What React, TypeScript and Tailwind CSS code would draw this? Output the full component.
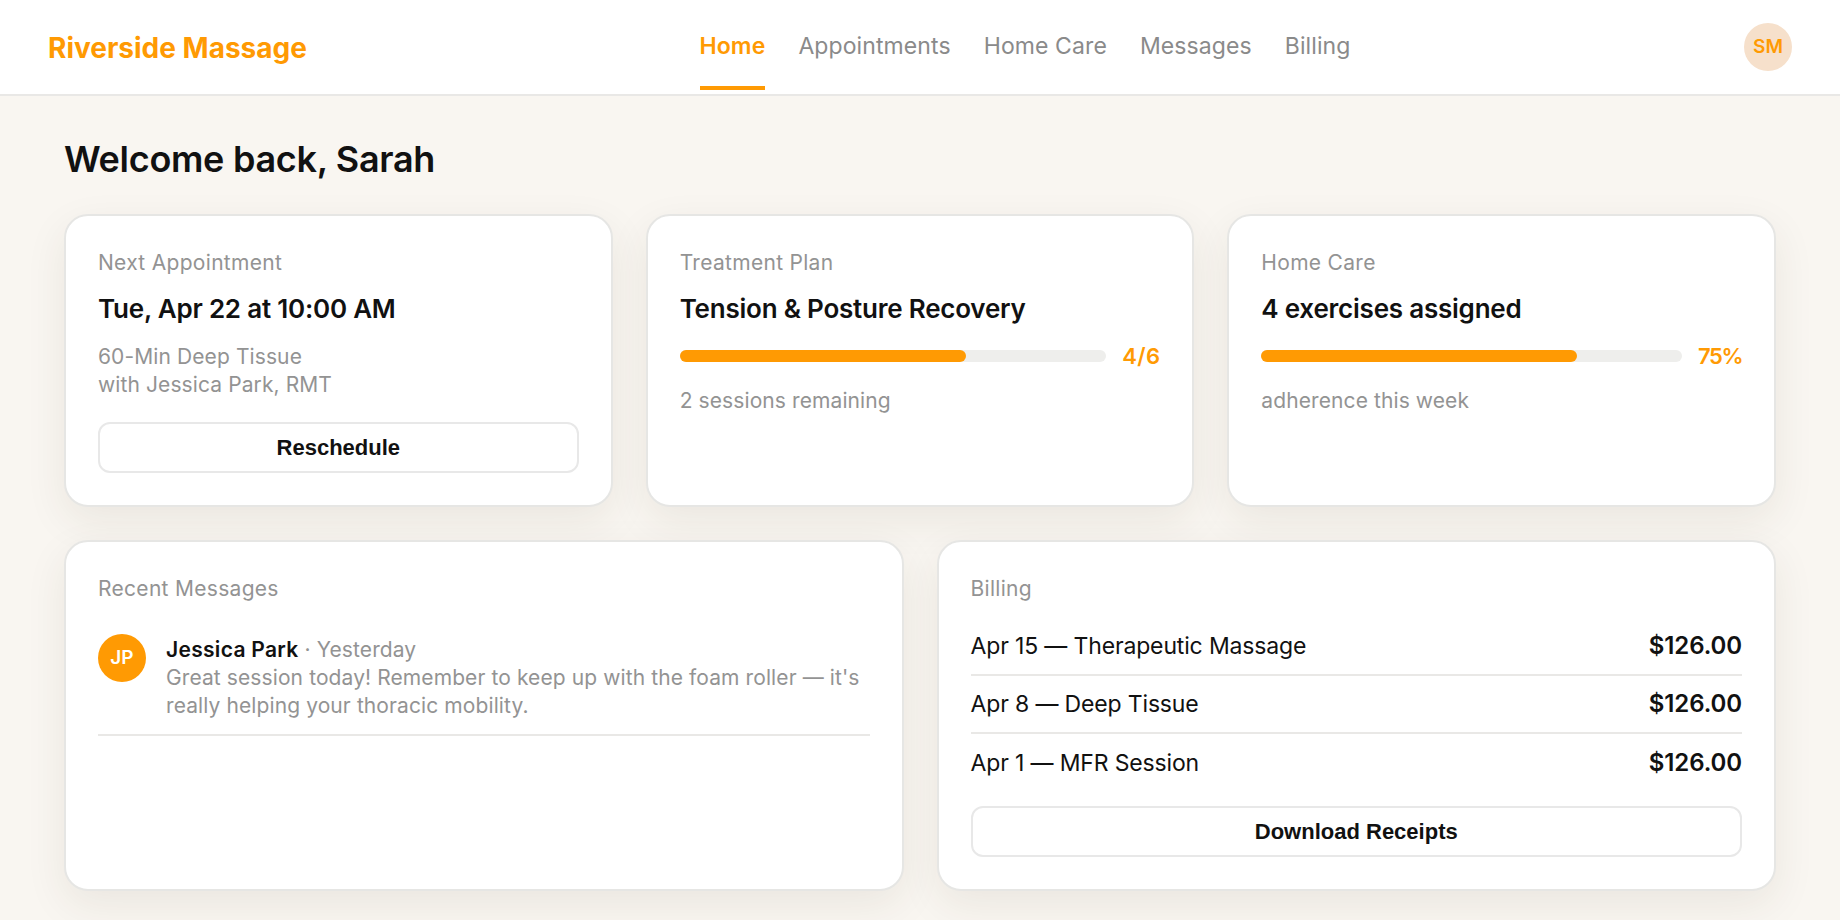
import React from 'react';

const FONT = "font-['Inter','Noto_Sans',sans-serif]";
const ORANGE = 'text-[#ff9a03]';

const navItems = ['Home', 'Appointments', 'Home Care', 'Messages', 'Billing'];

const bills = [
  { label: 'Apr 15 — Therapeutic Massage', amount: '$126.00' },
  { label: 'Apr 8 — Deep Tissue', amount: '$126.00' },
  { label: 'Apr 1 — MFR Session', amount: '$126.00' },
];

function Card({ children, className = '' }: { children: React.ReactNode; className?: string }) {
  return (
    <div
      className={`rounded-[24px] border-2 border-[#e6e6e4] bg-white px-[32px] pt-[33px] pb-[32px] shadow-[0_14px_42px_rgba(60,50,30,0.08)] ${className}`}
    >
      {children}
    </div>
  );
}

function Label({ children }: { children: React.ReactNode }) {
  return <div className="text-[21px] leading-[28px] tracking-[0.3px] text-[#939393]">{children}</div>;
}

function Title({ children }: { children: React.ReactNode }) {
  return <div className="mt-[16px] text-[26px] leading-[32px] font-semibold tracking-[-0.22px] text-[#111]">{children}</div>;
}

function OutlineButton({ children }: { children: React.ReactNode }) {
  return (
    <button className="h-[51px] w-full rounded-[12px] border-2 border-[#e8e8e8] bg-white font-['Liberation_Sans',sans-serif] text-[22px] font-bold text-[#111]">
      {children}
    </button>
  );
}

function Progress({ pct, value, tight }: { pct: number; value: string; tight?: boolean }) {
  return (
    <div className="mt-[17px] flex h-[28px] items-center gap-[16px]">
      <div className="h-[12px] flex-1 rounded-full bg-[#eeeeec]">
        <div className="h-full rounded-full bg-[#ff9a03]" style={{ width: `${pct}%` }} />
      </div>
      <span className={`text-[22px] font-semibold ${tight ? 'tracking-[-1.5px]' : 'tracking-[0.3px]'} ${ORANGE}`}>{value}</span>
    </div>
  );
}

export default function App() {
  return (
    <div className={`${FONT} h-[920px] overflow-hidden bg-[#f9f6f1]`}>
      <header className="flex h-[96px] items-center justify-between border-b-2 border-[#e9e8e6] bg-white px-[48px]">
        <div className={`w-[258px] pt-[2px] text-[28px] font-bold whitespace-nowrap ${ORANGE}`}>Riverside Massage</div>
        <nav className="flex h-full items-stretch gap-[33px]">
          {navItems.map((item, i) => (
            <a
              key={item}
              className={
                i === 0
                  ? `relative flex items-center pb-[1px] text-[23px] font-semibold tracking-[0.1px] ${ORANGE}`
                  : 'flex items-center pb-[1px] text-[23px] tracking-[0.1px] text-[#8a8a8a]'
              }
            >
              {item}
              {i === 0 && <span className="absolute right-0 bottom-[4px] left-0 h-[4px] bg-[#ff9a03]" />}
            </a>
          ))}
        </nav>
        <div className={`flex h-[48px] w-[48px] items-center justify-center rounded-full bg-[#f6e0cb] text-[19px] font-semibold ${ORANGE}`}>SM</div>
      </header>

      <main className="px-[64px] pt-[38px]">
        <h1 className="text-[36px] leading-[50px] font-semibold tracking-[-0.3px] text-[#111]">Welcome back, Sarah</h1>

        <div className="mt-[30px] grid grid-cols-3 gap-[33px]">
          <Card className="h-[293px]">
            <Label>Next Appointment</Label>
            <Title>Tue, Apr 22 at 10:00 AM</Title>
            <div className="mt-[18px] text-[21px] leading-[28px] tracking-[0.1px] text-[#939393]">
              60-Min Deep Tissue
              <br />
              with Jessica Park, RMT
            </div>
            <div className="mt-[23px]">
              <OutlineButton>Reschedule</OutlineButton>
            </div>
          </Card>
          <Card className="h-[293px]">
            <Label>Treatment Plan</Label>
            <Title>Tension &amp; Posture Recovery</Title>
            <Progress pct={67} value="4/6" />
            <div className="mt-[17px] text-[21px] leading-[28px] tracking-[0.1px] text-[#939393]">2 sessions remaining</div>
          </Card>
          <Card className="h-[293px]">
            <Label>Home Care</Label>
            <Title>4 exercises assigned</Title>
            <Progress pct={75} value="75%" tight />
            <div className="mt-[17px] text-[21px] leading-[28px] tracking-[0.1px] text-[#939393]">adherence this week</div>
          </Card>
        </div>

        <div className="mt-[33px] grid grid-cols-2 gap-[33px]">
          <Card className="h-[351px]">
            <Label>Recent Messages</Label>
            <div className="mt-[31px] flex gap-[20px] border-b-2 border-[#e9e8e6] pb-[14px]">
              <div className="flex h-[48px] w-[48px] shrink-0 items-center justify-center rounded-full bg-[#ff9a03] text-[19px] font-semibold text-white">JP</div>
              <div className="mt-[2px] text-[21px] leading-[28px] tracking-[0.1px] text-[#939393]">
                <div>
                  <span className="font-semibold tracking-[0.3px] text-[#111]">Jessica Park</span> · Yesterday
                </div>
                <div>Great session today! Remember to keep up with the foam roller — it's really helping your thoracic mobility.</div>
              </div>
            </div>
          </Card>
          <Card className="h-[351px]">
            <Label>Billing</Label>
            <div className="mt-[15px]">
              {bills.map((b, i) => (
                <div
                  key={b.label}
                  className={`flex h-[58px] items-center justify-between text-[23px] tracking-[-0.15px] text-[#111] ${i < 2 ? 'border-b-2 border-[#e9e8e6]' : ''}`}
                >
                  <span>{b.label}</span>
                  <span className="text-[24px] font-semibold tracking-[-0.1px]">{b.amount}</span>
                </div>
              ))}
            </div>
            <div className="mt-[14px]">
              <OutlineButton>Download Receipts</OutlineButton>
            </div>
          </Card>
        </div>
      </main>
    </div>
  );
}
